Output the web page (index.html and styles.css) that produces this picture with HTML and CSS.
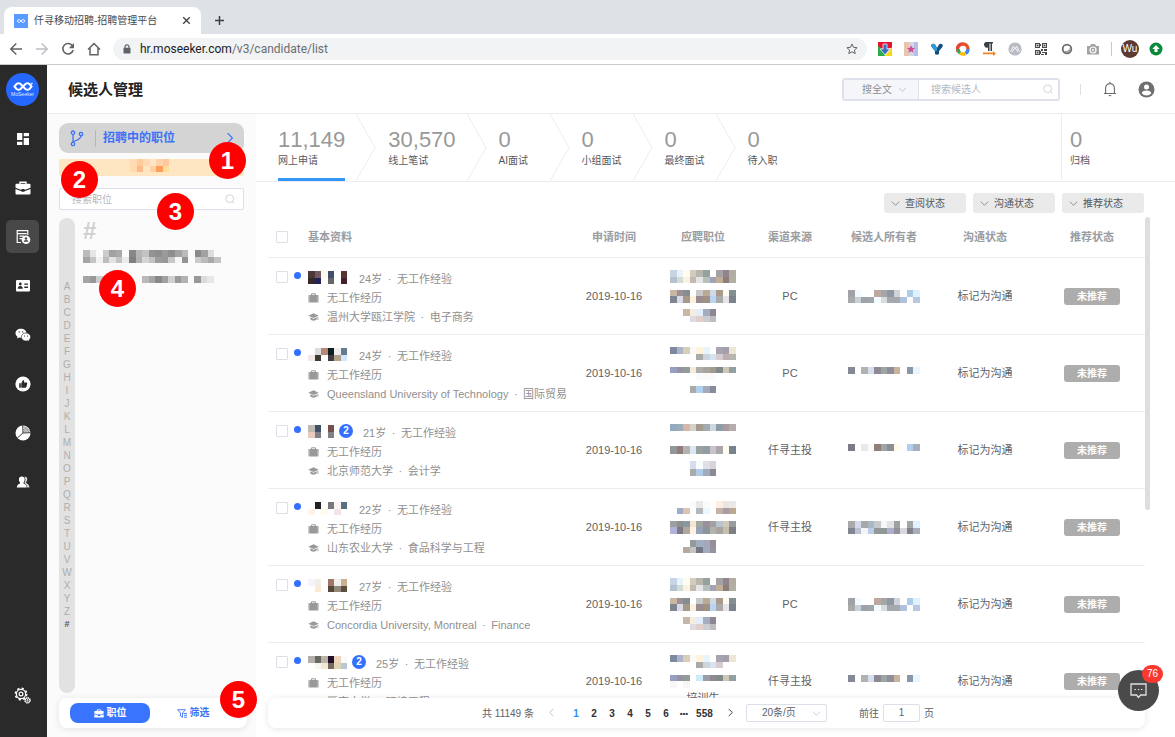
FILE: index.html
```html
<!DOCTYPE html>
<html lang="zh-CN">
<head>
<meta charset="utf-8">
<title>仟寻移动招聘-招聘管理平台</title>
<link rel="stylesheet" href="styles.css">
</head>
<body>
<svg class="defs" aria-hidden="true">
  <symbol id="chev-down" viewBox="0 0 10 10"><path d="M1 3l4 4 4-4" fill="none" stroke="currentColor"/></symbol>
  <symbol id="chev-right" viewBox="0 0 10 10"><path d="M3 1l4 4-4 4" fill="none" stroke="currentColor"/></symbol>
  <symbol id="chev-left" viewBox="0 0 10 10"><path d="M7 1L3 5l4 4" fill="none" stroke="currentColor"/></symbol>
  <symbol id="search" viewBox="0 0 10 10"><circle cx="4.7" cy="4.7" r="3.9" fill="none" stroke="currentColor" stroke-width=".8"/><path d="M7.5 7.5l1.9 1.9" stroke="currentColor" stroke-width=".8"/></symbol>
  <symbol id="bag" viewBox="0 0 10 10"><path d="M3 2.5V.8h4v1.700" fill="none" stroke="currentColor"/><rect x="0" y="2" width="1.300" height="7.500" rx=".5" fill="currentColor"/><rect x="1.500" y="2" width="7" height="7.500" fill="currentColor"/><rect x="8.700" y="2" width="1.300" height="7.500" rx=".5" fill="currentColor"/></symbol>
  <symbol id="cap" viewBox="0 0 12 10"><path d="M6 .8L.3 3.500 6 6.200l5.700-2.700z M2.500 5.300v2.200C4 9.600 8 9.600 9.500 7.500V5.300L6 7z M10.300 4.600h.9v3.600h-.9z" fill="currentColor"/></symbol>
  <symbol id="case" viewBox="0 0 16 14"><path d="M5 3V1.200h6V3" fill="none" stroke="currentColor" stroke-width="1.400"/><path d="M1.500 2.800h13q1 0 1 1v3L9.500 9V8h-3v1L.5 6.800v-3q0-1 1-1z M.5 8l6 2.200v.6h3v-.6l6-2.200v4.500q0 1-1 1h-13q-1 0-1-1z" fill="currentColor"/></symbol>
  <symbol id="stage-arrow" viewBox="0 0 20 67"><path d="M0 0l19 33.500L0 67" fill="none" stroke="#ecebf5"/></symbol>
  <symbol id="glasses" viewBox="0 0 24 10"><g fill="none" stroke="#fff" stroke-width="2.200"><path d="M12 5L9 2Q7 .6 5 2L2.500 5 5 8q2 1.400 4 0l3-3 3-3q2-1.400 4 0l2.500 3L19 8q-2 1.400-4 0z"/><path d="M21 2.500l1.500-1.300" stroke-width="1.400"/></g></symbol>
</svg>

<header class="browser">
  <div class="tabs">
    <div class="tab">
      <svg class="favicon" viewBox="0 0 14 14"><rect width="14" height="14" fill="#5b9bff"/><use href="#glasses" x="2" y="5" width="10" height="4"/></svg>
      <span>仟寻移动招聘-招聘管理平台</span>
      <button class="plain tab-close" aria-label="关闭"><svg width="9" height="9" viewBox="0 0 9 9"><path d="M1.200 1.200l6.600 6.600M7.800 1.200L1.200 7.800" stroke="#3c4043" stroke-width="1.300"/></svg></button>
    </div>
    <button class="plain tab-new" aria-label="新标签页"><svg width="11" height="11" viewBox="0 0 11 11"><path d="M5.500 1v9M1 5.500h9" stroke="#3c4043" stroke-width="1.500"/></svg></button>
  </div>
  <div class="toolbar">
    <nav class="history">
      <button class="plain" aria-label="后退"><svg width="14" height="14" viewBox="0 0 14 14"><path d="M13 7H2M7.300 1.500L1.800 7l5.500 5.500" fill="none" stroke="#5f6368" stroke-width="1.500"/></svg></button>
      <button class="plain" aria-label="前进"><svg width="14" height="14" viewBox="0 0 14 14"><path d="M1 7h11M6.700 1.500L12.200 7l-5.500 5.500" fill="none" stroke="#bcbfc3" stroke-width="1.500"/></svg></button>
      <button class="plain" aria-label="刷新"><svg width="14" height="14" viewBox="0 0 14 14"><path d="M11.600 4.200A5.200 5.200 0 1 0 12.100 8" fill="none" stroke="#5f6368" stroke-width="1.600"/><path d="M13 1v5.200H7.800z" fill="#5f6368"/></svg></button>
      <button class="plain" aria-label="主页"><svg width="14" height="14" viewBox="0 0 14 14"><path d="M1 7.500L7 1.500l6 6M3 6v6.700h2.500M8.500 12.700H11V6M3 12.700h8" fill="none" stroke="#5f6368" stroke-width="1.500"/></svg></button>
    </nav>
    <div class="address">
      <svg width="8" height="10" viewBox="0 0 8 10"><path d="M2 4V2.800a2 2 0 0 1 4 0V4" fill="none" stroke="#5f6368" stroke-width="1.200"/><rect x=".5" y="3.800" width="7" height="5.700" rx=".7" fill="#5f6368"/></svg>
      <span class="url"><b>hr.moseeker.com</b>/v3/candidate/list</span>
      <svg class="star" width="12" height="12" viewBox="0 0 12 12"><path d="M6 1l1.500 3.300 3.600.4-2.700 2.400.8 3.500L6 8.800l-3.200 1.800.8-3.500L.9 4.700l3.600-.4z" fill="none" stroke="#5f6368"/></svg>
    </div>
    <div class="extensions">
      <svg viewBox="0 0 14 14"><path d="M0 0h14v6L7 7 0 6z" fill="#e8112d"/><path d="M14 5L7 14h7z" fill="#f8d90f"/><path d="M0 4l6 4 1 6H0z" fill="#2aa84a"/><path d="M5 2h4v5h3l-5 6-5-6h3z" fill="#3b6fc4" stroke="#fff" stroke-width=".7"/></svg>
      <svg viewBox="0 0 14 14"><path fill="#e7c8ae" d="M0 0h5v14H0z"/><path fill="#d8d4e4" d="M5 0h5v14H5z"/><path fill="#b7bfe6" d="M10 0h4v14h-4z"/><path d="M7 3l1.100 2.800 3 .2-2.300 1.900.8 2.900L7 9.200l-2.600 1.600.8-2.900L2.900 6l3-.2z" fill="#d14b9b"/></svg>
      <svg viewBox="0 0 14 14"><path d="M1.500 2.500Q3 1 5 2.500L7 6l2-3.500q2-1.500 3.500 0 .8 1.500-.5 3L9 9v3q-2 1.500-4 0V9L2 5.500q-1.300-1.500-.5-3z" fill="#164b80"/><path d="M1.500 2.500Q3 1 5 2.500L7 6v3H5L2 5.500q-1.300-1.500-.5-3z" fill="#2c9ad6"/></svg>
      <svg viewBox="0 0 14 14"><g fill="none" stroke-width="3.400"><path d="M2.200 9.500A5 5 0 0 1 7 2" stroke="#ea4335"/><path d="M7 2a5 5 0 0 1 5 5" stroke="#e65320"/><path d="M12 7a5 5 0 0 1-2.500 4.400" stroke="#4285f4"/><path d="M9.500 11.400A5 5 0 0 1 4 11" stroke="#fbbc05"/><path d="M4 11A5 5 0 0 1 2 7" stroke="#34a853"/></g></svg>
      <svg viewBox="0 0 14 14"><path d="M4 0h7v1.500h-1V9H8.500V1.500h-1V9H6V5.500A2.750 2.750 0 0 1 4 0z" fill="#3a3f46"/><path d="M1 10.500h10V9l3 2.700-3 2.300v-1.800H1z" fill="#f5821f"/></svg>
      <svg viewBox="0 0 14 14"><circle cx="7" cy="7" r="6.600" fill="#b9bcc3"/><path d="M2.500 9.500l3-5L7 7l1.500-2.500 3 5M4 10l2-3M10 10L8 7" fill="none" stroke="#fff" stroke-width=".9"/></svg>
      <svg viewBox="0 0 14 14"><path fill="#4a4a4a" d="M1 1h5v5H1zM8 1h5v5H8zM1 8h5v5H1zM7 7h2v2H7zM10 7h3v2h-3zM8 10h3v1H8zM11 10h2v3h-2zM7 12h3v1H7zM6 2h1v2H6zM6 9h1v3H6z"/><path fill="#fff" d="M2 2h3v3H2zM9 2h3v3H9zM2 9h3v3H2z"/><path fill="#4a4a4a" d="M2.500 2.500h2v2h-2zM9.500 2.500h2v2h-2zM2.500 9.500h2v2h-2z"/></svg>
      <svg viewBox="0 0 14 14"><circle cx="7" cy="7" r="4.300" fill="#fff" stroke="#6a6a6a" stroke-width="1.800"/><path d="M4 8.500a3.400 3.400 0 0 0 6-3.300A4 4 0 0 1 4 8.500z" fill="#999"/></svg>
      <svg viewBox="0 0 14 14"><path d="M1 4h3l1-2h4l1 2h3v8.500H1z" fill="#a3a3a3"/><circle cx="7" cy="8" r="3" fill="none" stroke="#fff" stroke-width="1.200"/><circle cx="7" cy="8" r="1" fill="#fff"/></svg>
    </div>
    <div class="profile">
      <span class="wu">Wu</span>
      <svg width="14" height="14" viewBox="0 0 14 14"><circle cx="7" cy="7" r="6.500" fill="#0b8a3b"/><path d="M7 3l3.700 4H8.500v3h-3V7H3.300z" fill="#fff"/></svg>
    </div>
  </div>
</header>

<div class="app">
  <nav class="rail">
    <a class="logo" href="#" aria-label="MoSeeker"><svg width="22" height="9"><use href="#glasses" width="22" height="9"/></svg><span>MoSeeker</span></a>
    <a href="#" aria-label="概览"><svg width="14" height="14" viewBox="0 0 14 14"><path fill="#fff" d="M1 1h5.300v7H1zM1 9.700h5.300V13H1zM7.700 1H13v3.300H7.700zM7.700 6H13v7H7.700z"/></svg></a>
    <a href="#" aria-label="职位"><svg width="16" height="14"><use href="#case" width="16" height="14"/></svg></a>
    <a class="on" href="#" aria-label="候选人"><svg width="16" height="16" viewBox="0 0 16 16"><path d="M6 13.500H2.200V1.700h10.600V6M2.200 4.700h9.500M4.500 7.200h4.500M4.500 9.700h2.500" fill="none" stroke="#fff" stroke-width="1.200"/><circle cx="11" cy="10.800" r="4.300" fill="#fff"/><circle cx="11" cy="9.500" r="1.300" fill="#484848"/><path d="M8.600 12.700q0-1.800 2.400-1.800t2.400 1.800z" fill="#484848"/></svg></a>
    <a href="#" aria-label="名片"><svg width="14" height="12" viewBox="0 0 14 12"><rect width="14" height="11.500" rx="1" fill="#fff"/><circle cx="4.300" cy="4" r="1.400" fill="#2a2a2a"/><path d="M1.800 8.700q0-2.700 2.500-2.700t2.500 2.700zM8.300 3.400H12v1.300H8.300zM8.300 6.600H12v1.300H8.300z" fill="#2a2a2a"/></svg></a>
    <a href="#" aria-label="微信"><svg width="16" height="14" viewBox="0 0 16 14"><path d="M6 .8C2.800.8.5 2.800.5 5.300c0 1.500.8 2.700 2 3.500L2 10.500l2-1q1 .3 2 .3C9 9.800 11.500 7.800 11.500 5.300S9 .8 6 .8z" fill="#fff"/><path d="M11 5c-2.700 0-4.700 1.700-4.700 4s2 4 4.700 4l1.700-.3 1.600.9-.4-1.500c1-.8 1.700-1.900 1.700-3.100 0-2.300-2-4-4.600-4z" fill="#fff" stroke="#2a2a2a" stroke-width=".6"/><g fill="#2a2a2a"><circle cx="4.200" cy="3.900" r=".7"/><circle cx="7.700" cy="3.900" r=".7"/><circle cx="9.500" cy="8" r=".6"/><circle cx="12.500" cy="8" r=".6"/></g></svg></a>
    <a href="#" aria-label="推荐"><svg width="16" height="16" viewBox="0 0 16 16"><circle cx="8" cy="8" r="7.600" fill="#fff"/><path d="M4.200 7.200h1.600v4.500H4.200zM6.300 7.200L8 4q1.500 0 1.100 2.400h2.500q.8.200.6 1l-.8 3.500q-.2.800-1 .8H6.300z" fill="#2a2a2a"/></svg></a>
    <a href="#" aria-label="统计"><svg width="16" height="16" viewBox="0 0 16 16"><circle cx="8" cy="8" r="7.500" fill="#fff"/><path d="M8 8L7.700.3M8 8L2.300 13M8 8l7.600-.3" fill="none" stroke="#2a2a2a" stroke-width=".9"/><path d="M8.500 2l5.700 5.500M8.500 4l3.500 3.500M8.500 6l1.500 1.500M10 1.500l5 5" fill="none" stroke="#2a2a2a" stroke-width=".7"/></svg></a>
    <a href="#" aria-label="人员"><svg width="14" height="12" viewBox="0 0 14 12"><path d="M8.300.8Q11 .3 11.300 3q0 1.800-1.200 3v1q3 1 3.400 4.500h-2Q11 8.500 8.500 7q2-4 -.2-6.200z" fill="#ddd"/><path d="M5.800.6q2.900 0 2.900 3 0 1.800-1.200 3v.9q3 .8 3.300 4H.8q.3-3.200 3.300-4v-.9Q2.900 5.400 2.900 3.600q0-3 2.900-3z" fill="#fff"/></svg></a>
    <a class="settings" href="#" aria-label="设置"><svg width="18" height="18" viewBox="0 0 18 18"><g fill="none" stroke="#fff"><circle cx="7" cy="7" r="4.600" stroke-width="1.200"/><circle cx="7" cy="7" r="5.700" stroke-width="1.500" stroke-dasharray="2.200 2.270"/><circle cx="7" cy="7" r="1.900" stroke-width="1.200"/><circle cx="13.500" cy="13.300" r="2.300"/><circle cx="13.500" cy="13.300" r="3" stroke-dasharray="1.200 1.150"/><circle cx="13.500" cy="13.300" r=".7"/></g></svg></a>
  </nav>

  <div class="page">
    <header class="topbar">
      <h1>候选人管理</h1>
      <form class="finder">
        <select aria-label="搜索范围"><option>搜全文</option></select>
        <svg class="caret" width="9" height="9"><use href="#chev-down" width="9" height="9"/></svg>
        <input type="text" placeholder="搜索候选人" aria-label="搜索候选人">
        <svg class="lens" width="10" height="10"><use href="#search" width="10" height="10"/></svg>
      </form>
      <span class="rule"></span>
      <button class="plain" aria-label="通知"><svg width="14" height="16" viewBox="0 0 14 16"><path d="M1 12.500h12M2.600 12.500V7a4.400 4.400 0 0 1 8.800 0v5.500M7 2.500V.8" fill="none" stroke="#6a6a6a" stroke-width="1.100"/><path d="M5.300 14h3.400L7 15.500z" fill="#6a6a6a"/></svg></button>
      <button class="plain" aria-label="账户"><svg width="17" height="17" viewBox="0 0 17 17"><circle cx="8.500" cy="8.500" r="8" fill="#6f6f6f"/><circle cx="8.500" cy="6" r="2.500" fill="#fff"/><path d="M3.700 12.200q.5-2.700 4.800-2.700t4.800 2.700q-1.800 2.200-4.800 2.200t-4.800-2.200z" fill="#fff"/></svg></button>
    </header>

    <div class="work">
      <aside class="jobs">
        <button class="scope"><svg width="14" height="17" viewBox="0 0 14 17"><g fill="none" stroke="#3d72f6" stroke-width="1.300"><circle cx="3" cy="2.700" r="1.700"/><circle cx="3" cy="14" r="1.700"/><circle cx="11" cy="4" r="1.700"/><path d="M3 4.400v7.900M11 5.700Q11 9 3.500 11.500"/></g></svg><i></i><span>招聘中的职位</span><svg class="go" width="12" height="12"><use href="#chev-right" width="12" height="12"/></svg></button>
        <div class="notice"><svg class="mosaic" data-mosaic="notice" width="39" height="13"></svg></div>
        <label class="job-search"><input type="text" placeholder="搜索职位" aria-label="搜索职位"><svg width="10" height="10"><use href="#search" width="10" height="10"/></svg></label>
        <div class="directory">
          <ol class="letters"><li>A<li>B<li>C<li>D<li>E<li>F<li>G<li>H<li>I<li>J<li>K<li>L<li>M<li>N<li>O<li>P<li>Q<li>R<li>S<li>T<li>U<li>V<li>W<li>X<li>Y<li>Z<li class="now">#</ol>
          <div class="list"><h2>#</h2>
            <svg class="mosaic" data-mosaic="jobA" width="138" height="13"></svg>
            <svg class="mosaic" data-mosaic="jobB" width="131" height="7"></svg>
          </div>
        </div>
        <div class="switch">
          <button class="active"><svg width="10" height="9"><use href="#case" width="10" height="9"/></svg>职位</button>
          <button><svg width="10" height="9" viewBox="0 0 10 9"><path d="M.5.700h8L5.500 4v4.300L3.500 7V4zM6.500 4.500H10M7 6.300h3M7 8.200h3" fill="none" stroke="currentColor" stroke-width=".9"/></svg>筛选</button>
        </div>
      </aside>

      <main class="candidates">
        <nav class="stages">
          <a class="stage on" href="#"><strong>11,149</strong>网上申请</a><svg class="arrow"><use href="#stage-arrow"/></svg>
          <a class="stage" href="#"><strong>30,570</strong>线上笔试</a><svg class="arrow"><use href="#stage-arrow"/></svg>
          <a class="stage" href="#"><strong>0</strong>AI面试</a><svg class="arrow"><use href="#stage-arrow"/></svg>
          <a class="stage" href="#"><strong>0</strong>小组面试</a><svg class="arrow"><use href="#stage-arrow"/></svg>
          <a class="stage" href="#"><strong>0</strong>最终面试</a><svg class="arrow"><use href="#stage-arrow"/></svg>
          <a class="stage" href="#"><strong>0</strong>待入职</a>
          <a class="stage archive" href="#"><strong>0</strong>归档</a>
        </nav>
        <div class="filters">
          <button><svg width="9" height="9"><use href="#chev-down" width="9" height="9"/></svg>查阅状态</button>
          <button><svg width="9" height="9"><use href="#chev-down" width="9" height="9"/></svg>沟通状态</button>
          <button><svg width="9" height="9"><use href="#chev-down" width="9" height="9"/></svg>推荐状态</button>
        </div>
        <div class="scroller">
          <table>
            <colgroup><col class="c-pick"><col><col class="c-time"><col class="c-job"><col class="c-src"><col class="c-src"><col class="c-talk"><col class="c-rec"></colgroup>
            <thead><tr><th class="pick"><input type="checkbox" aria-label="全选"></th><th class="title">基本资料</th><th>申请时间</th><th>应聘职位</th><th>渠道来源</th><th>候选人所有者</th><th>沟通状态</th><th>推荐状态</th></tr></thead>
            <tbody>
              <tr><td class="pick"><input type="checkbox" aria-label="选择"><i class="dot"></i></td>
                <td class="info"><p class="who"><svg class="mosaic" data-mosaic="n1" width="39" height="13"></svg><span>24岁&ensp;·&ensp;无工作经验</span></p><p><svg class="ic"><use href="#bag"/></svg>无工作经历</p><p><svg class="ic"><use href="#cap"/></svg>温州大学瓯江学院&ensp;·&ensp;电子商务</p></td>
                <td>2019-10-16</td><td><svg class="mosaic" data-mosaic="p1" width="66" height="52"></svg></td><td>PC</td><td><svg class="mosaic" data-mosaic="o1" width="72" height="13"></svg></td><td>标记为沟通</td><td><span class="tag">未推荐</span></td></tr>
              <tr><td class="pick"><input type="checkbox" aria-label="选择"><i class="dot"></i></td>
                <td class="info"><p class="who"><svg class="mosaic" data-mosaic="n2" width="39" height="13"></svg><span>24岁&ensp;·&ensp;无工作经验</span></p><p><svg class="ic"><use href="#bag"/></svg>无工作经历</p><p><svg class="ic"><use href="#cap"/></svg>Queensland University of Technology&ensp;·&ensp;国际贸易</p></td>
                <td>2019-10-16</td><td><svg class="mosaic" data-mosaic="p2" width="66" height="52"></svg></td><td>PC</td><td><svg class="mosaic" data-mosaic="o2" width="72" height="13"></svg></td><td>标记为沟通</td><td><span class="tag">未推荐</span></td></tr>
              <tr><td class="pick"><input type="checkbox" aria-label="选择"><i class="dot"></i></td>
                <td class="info"><p class="who multi"><svg class="mosaic" data-mosaic="n3" width="26" height="13"></svg><b>2</b><span>21岁&ensp;·&ensp;无工作经验</span></p><p><svg class="ic"><use href="#bag"/></svg>无工作经历</p><p><svg class="ic"><use href="#cap"/></svg>北京师范大学&ensp;·&ensp;会计学</p></td>
                <td>2019-10-16</td><td><svg class="mosaic" data-mosaic="p3" width="66" height="52"></svg></td><td>仟寻主投</td><td><svg class="mosaic" data-mosaic="o3" width="72" height="13"></svg></td><td>标记为沟通</td><td><span class="tag">未推荐</span></td></tr>
              <tr><td class="pick"><input type="checkbox" aria-label="选择"><i class="dot"></i></td>
                <td class="info"><p class="who"><svg class="mosaic" data-mosaic="n4" width="39" height="13"></svg><span>22岁&ensp;·&ensp;无工作经验</span></p><p><svg class="ic"><use href="#bag"/></svg>无工作经历</p><p><svg class="ic"><use href="#cap"/></svg>山东农业大学&ensp;·&ensp;食品科学与工程</p></td>
                <td>2019-10-16</td><td><svg class="mosaic" data-mosaic="p4" width="66" height="52"></svg></td><td>仟寻主投</td><td><svg class="mosaic" data-mosaic="o4" width="72" height="13"></svg></td><td>标记为沟通</td><td><span class="tag">未推荐</span></td></tr>
              <tr><td class="pick"><input type="checkbox" aria-label="选择"><i class="dot"></i></td>
                <td class="info"><p class="who"><svg class="mosaic" data-mosaic="n5" width="39" height="13"></svg><span>27岁&ensp;·&ensp;无工作经验</span></p><p><svg class="ic"><use href="#bag"/></svg>无工作经历</p><p><svg class="ic"><use href="#cap"/></svg>Concordia University, Montreal&ensp;·&ensp;Finance</p></td>
                <td>2019-10-16</td><td><svg class="mosaic" data-mosaic="p1" width="66" height="52"></svg></td><td>PC</td><td><svg class="mosaic" data-mosaic="o1" width="72" height="13"></svg></td><td>标记为沟通</td><td><span class="tag">未推荐</span></td></tr>
              <tr><td class="pick"><input type="checkbox" aria-label="选择"><i class="dot"></i></td>
                <td class="info"><p class="who multi"><svg class="mosaic" data-mosaic="n6" width="39" height="13"></svg><b>2</b><span>25岁&ensp;·&ensp;无工作经验</span></p><p><svg class="ic"><use href="#bag"/></svg>无工作经历</p><p><svg class="ic"><use href="#cap"/></svg>暨南大学&ensp;·&ensp;环境工程</p></td>
                <td>2019-10-16</td><td class="job-text"><svg class="mosaic" data-mosaic="p6" width="66" height="33"></svg>培训生</td><td>仟寻主投</td><td><svg class="mosaic" data-mosaic="o2" width="72" height="13"></svg></td><td>标记为沟通</td><td><span class="tag">未推荐</span></td></tr>
            </tbody>
          </table>
          <span class="thumb"></span>
        </div>
        <footer class="pager">
          <span class="total">共 11149 条</span>
          <button class="off" aria-label="上一页"><svg width="9" height="9"><use href="#chev-left" width="9" height="9"/></svg></button>
          <button class="on">1</button><button>2</button><button>3</button><button>4</button><button>5</button><button>6</button><button class="more">•••</button><button class="wide">558</button>
          <button class="next" aria-label="下一页"><svg width="9" height="9"><use href="#chev-right" width="9" height="9"/></svg></button>
          <span class="size"><select aria-label="每页条数"><option>20条/页</option></select><svg width="9" height="9"><use href="#chev-down" width="9" height="9"/></svg></span>
          <label class="jump">前往<input type="text" value="1">页</label>
        </footer>
      </main>
    </div>
  </div>

  <span class="step s1">1</span><span class="step s2">2</span><span class="step s3">3</span><span class="step s4">4</span><span class="step s5">5</span>
  <button class="chat" aria-label="消息"><svg width="17" height="16" viewBox="0 0 17 16"><path d="M1 1h15v11h-5.500l-2 2.500-2-2.500H1z" fill="none" stroke="#e0e0e0" stroke-width="1.300"/><path d="M4.500 6.500H6M7.800 6.500h1.500M11 6.500h1.500" stroke="#e0e0e0" stroke-width="1.200"/></svg><span>76</span></button>
</div>
<script src="mosaic.js"></script>
</body>
</html>
```
FILE: styles.css
```css
* { box-sizing: border-box; }
body {
  margin: 0;
  height: 100vh;
  display: flex;
  flex-direction: column;
  overflow: hidden;
  background: #fff;
  color: #606266;
  font: 11px/19px "Liberation Sans", "Noto Sans CJK SC", sans-serif;
}
button, input, select { font: inherit; color: inherit; margin: 0; padding: 0; }
button { border: 0; background: none; }
a { color: inherit; text-decoration: none; }
p, h1, h2, ol { margin: 0; padding: 0; }
svg { flex: none; }
.defs { position: absolute; width: 0; height: 0; }
.plain { display: flex; align-items: center; justify-content: center; }
::placeholder { color: #b4b8c0; opacity: 1; }

/* browser frame */
.browser { flex: none; border-bottom: 1px solid #c9cbce; }
.tabs { height: 34px; padding: 7px 0 0 4px; display: flex; background: #dee1e6; }
.tab {
  width: 197px;
  padding: 0 10px;
  display: flex;
  align-items: center;
  gap: 6px;
  border-radius: 8px 8px 0 0;
  background: #fff;
  color: #45494d;
  font-size: 10px;
}
.favicon { width: 14px; height: 14px; }
.tab-close { margin-left: auto; }
.tab-new { width: 36px; }
.toolbar { height: 30px; display: flex; align-items: center; padding: 0 12px 0 9px; }
.history { display: flex; gap: 12px; width: 104px; }
.address {
  flex: 1;
  height: 22px;
  padding: 0 9px 0 10px;
  display: flex;
  align-items: center;
  gap: 9px;
  border-radius: 11px;
  background: #f1f3f4;
}
.url { color: #6a6e73; font: 12px/22px Roboto, sans-serif; }
.url b { color: #202124; font-weight: 400; }
.star { margin-left: auto; }
.extensions { display: flex; gap: 12px; padding: 0 11px; }
.extensions svg { width: 14px; height: 14px; }
.profile { display: flex; align-items: center; gap: 10px; padding-left: 9px; border-left: 1px solid #c6c8cb; height: 14px; }
.wu { width: 18px; border-radius: 9px; background: #5d3a30; color: #fff; font-size: 10px; line-height: 18px; text-align: center; }

/* application shell */
.app { flex: 1; min-height: 0; display: flex; position: relative; }
.rail {
  width: 47px;
  flex: none;
  padding: 8px 2px 25px 0;
  display: flex;
  flex-direction: column;
  align-items: center;
  gap: 16px;
  background: #2a2a2a;
}
.rail a { width: 33px; height: 33px; flex: none; display: flex; align-items: center; justify-content: center; border-radius: 5px; color: #fff; }
.rail .logo { flex-direction: column; border-radius: 50%; background: #2468ff; color: #dfe8ff; }
.logo span { font-size: 5px; line-height: 7px; }
.rail .on { background: #484848; }
.rail .settings { margin-top: auto; }
.page { flex: 1; min-width: 0; display: flex; flex-direction: column; }

.topbar { height: 49px; flex: none; padding: 0 20px 0 21px; display: flex; align-items: center; border-bottom: 1px solid #ebebef; }
.topbar h1 { margin-right: auto; color: #222; font-size: 15px; font-weight: 700; }
.finder { display: flex; align-items: center; width: 218px; height: 23px; position: relative; border: 2px solid #dfe2ec; border-radius: 3px; }
.finder select { appearance: none; width: 75px; height: 19px; padding-left: 18px; border: 0; border-right: 1px solid #dfe2ec; border-radius: 0; background: #f5f6fa; color: #8b8f96; font-size: 10px; }
.caret { position: absolute; left: 54px; color: #b9bdc6; }
.finder input { flex: 1; min-width: 0; height: 19px; padding-left: 12px; border: 0; font-size: 10px; }
.lens { margin-right: 5px; color: #c5c9d2; }
.rule { width: 1px; height: 11px; margin: 0 22px 0 20px; background: #dedfe4; }
.topbar .plain + .plain { margin-left: 21px; }

.work { flex: 1; min-height: 0; display: flex; }

/* job panel */
.jobs { width: 209px; flex: none; padding: 9px 12px; display: flex; flex-direction: column; background: #fbfbfb; }
.scope { height: 30px; flex: none; padding: 0 8px 0 11px; display: flex; align-items: center; border-radius: 9px; background: #d4d4d4; color: #3d72f6; font-size: 12px; font-weight: 700; }
.scope i { width: 1px; height: 17px; margin: 0 7px 0 11px; background: #b7b7b7; }
.go { margin-left: auto; }
.notice { height: 17px; margin: 6px 0 12px; padding-right: 5px; flex: none; display: flex; justify-content: center; border-radius: 2px; background: #ffe6c2; }
.job-search { height: 22px; flex: none; padding: 0 8px 0 12px; display: flex; align-items: center; border: 1px solid #dcdfe8; border-radius: 2px; background: #fff; color: #c5c9d2; }
.job-search input { flex: 1; min-width: 0; border: 0; font-size: 10px; }
.directory { flex: 1; min-height: 0; margin-top: 8px; display: flex; }
.letters { width: 16px; padding-top: 62px; border-radius: 8px; background: #e2e2e2; color: #aeaeae; font-size: 10px; line-height: 13px; text-align: center; list-style: none; }
.letters .now { color: #555; font-size: 9px; font-weight: 700; }
.list { padding-left: 8px; display: flex; flex-direction: column; }
.list h2 { margin-bottom: 7px; color: #d0d0d0; font-size: 24px; font-weight: 700; line-height: 25px; }
.list .mosaic + .mosaic { margin-top: 13px; }
.switch { height: 30px; flex: none; margin: 5px -3px 0 0; padding: 5px 11px; display: flex; border-radius: 8px; background: #fff; box-shadow: 0 1px 7px #0000001a; color: #3d72f6; font-size: 10px; font-weight: 700; }
.switch button { flex: 1; display: flex; align-items: center; justify-content: center; gap: 3px; border-radius: 8px; line-height: 20px; }
.switch .active { flex: none; width: 80px; background: #3874ff; color: #fff; }

/* stages */
.candidates { flex: 1; min-width: 0; display: flex; flex-direction: column; padding-bottom: 9px; }
.stages { height: 68px; flex: none; display: flex; padding-left: 22px; border-bottom: 1px solid #ececf1; }
.stage { min-width: 40px; padding-top: 15px; display: flex; flex-direction: column; border-bottom: 3px solid transparent; color: #55585e; font-size: 10px; line-height: 19px; }
.stage strong { color: #999; font-size: 22px; font-weight: 400; line-height: 22px; font-kerning: none; }
.stage.on { border-color: #3296fa; }
.arrow { width: 20px; height: 67px; margin: 0 12px 0 11px; }
.archive { width: 114px; margin-left: auto; padding-left: 8px; border-left: 1px solid #ececf1; }
.filters { display: flex; justify-content: flex-end; gap: 7px; margin: 11px 31px 4px 0; flex: none; }
.filters button { width: 82px; height: 20px; padding-left: 7px; display: flex; align-items: center; gap: 5px; border-radius: 3px; background: #eaeaea; color: #55585e; font-size: 10px; }
.filters svg { color: #888; }

/* table */
.scroller { flex: 1; min-height: 0; position: relative; overflow: hidden; margin: 0 25px 0 12px; }
table { width: calc(100% - 5px); table-layout: fixed; border-collapse: separate; border-spacing: 0; }
.c-pick { width: 40px; }
.c-time { width: 98px; }
.c-job { width: 80px; }
.c-src { width: 94px; }
.c-talk { width: 108px; }
.c-rec { width: 106px; }
th, td { padding: 0; border-bottom: 1px solid #ecedf2; text-align: center; white-space: nowrap; }
th { height: 41px; color: #999ca1; font-weight: 700; }
td { height: 77px; }
th.title, .info { text-align: left; }
.info { padding-top: 4px; color: #909090; }
.pick { text-align: left; vertical-align: top; }
td.pick { padding-top: 5px; }
th.pick { padding-top: 6px; }
input[type="checkbox"] { appearance: none; width: 12px; height: 12px; margin: 8px 0 0 8px; border: 1px solid #dcdfe8; border-radius: 1px; background: #fff; }
.dot { display: inline-block; width: 7px; height: 7px; margin: 0 0 4px 6px; border-radius: 50%; background: #3370ff; }
.info p { height: 19px; display: flex; align-items: center; gap: 8px; }
.info .who { gap: 12px; }
.who .mosaic, .who b { margin-bottom: 4px; }
.info .multi { gap: 5px; }
.multi b { width: 14px; height: 14px; border-radius: 50%; background: #3370ff; color: #fff; font-size: 10px; line-height: 14px; text-align: center; }
.multi span { margin-left: 5px; }
.ic { width: 11px; height: 10px; color: #999; }
td .mosaic { vertical-align: middle; }
.job-text { vertical-align: top; padding-top: 12px; line-height: 20px; }
.job-text .mosaic { display: block; margin: 0 auto; }
.tag { display: inline-block; width: 56px; border-radius: 3px; background: #adadad; color: #fff; font-size: 10px; font-weight: 700; line-height: 17px; }
.thumb { position: absolute; right: 0; top: 0; width: 5px; height: 61%; border-radius: 3px; background: #dddee0; }

/* pager */
.pager { height: 30px; flex: none; margin: 0 30px 0 12px; padding-left: 3px; display: flex; align-items: center; justify-content: center; border-radius: 8px; background: #fff; box-shadow: 0 1px 7px #0000001a; position: relative; font-size: 10px; }
.pager button { width: 18px; height: 20px; color: #303133; font-weight: 700; text-align: center; }
.pager .on { color: #2f8ff7; }
.pager .off { margin: 0 6px 0 9px; color: #b8bcc4; }
.pager .wide { width: 23px; }
.pager .next { margin-left: 6px; }
.pager .more { font-size: 8px; }
.size { position: relative; display: flex; align-items: center; margin: 0 32px 0 6px; }
.size select { appearance: none; width: 81px; height: 18px; padding-left: 15px; border: 1px solid #dcdfe8; border-radius: 2px; background: #fff; line-height: 16px; }
.size svg { position: absolute; right: 6px; color: #c5c9d2; }
.jump { display: flex; gap: 4px; }
.jump input { width: 37px; height: 18px; border: 1px solid #dcdfe8; border-radius: 2px; text-align: center; }

/* floating markers */
.step { position: absolute; width: 37px; height: 37px; border-radius: 50%; background: #f00; color: #fff; font-size: 24px; font-weight: 700; line-height: 37px; text-align: center; }
.s1 { left: 209px; top: 77px; }
.s2 { left: 61px; top: 96px; }
.s3 { left: 157px; top: 128px; }
.s4 { left: 99px; top: 205px; }
.s5 { left: 220px; bottom: 19px; }
.chat { position: absolute; right: 16px; bottom: 26px; width: 41px; height: 41px; display: flex; align-items: center; justify-content: center; border-radius: 50%; background: #4a4a4a; }
.chat span { position: absolute; right: -4px; top: -5px; width: 21px; border-radius: 9px; background: #f9392f; color: #fff; font-size: 10px; line-height: 18px; }
```
FILE: mosaic.js
```js
// Pixelated placeholders for private text: rows split by "/", "-" leaves a cell empty.
const mosaics = {
  notice: "ffdcb5 ffcc99 ffd9b0 - ffd2ac ffc9a0/ffdcaa ffb98e - ffcfa5 ff9e58 ffdd9c",
  jobA: "bbb e6e6e6 - ccc a2a2a2 aaa - 888 b5b5b5 c2c2c2 939393 8e8e8e 9a9a9a 8e8e8e a4a4a4 bbb - 8a8a8a a2a2a2 ddd -/a4a4a4 c5c5c5 f2f2f2 bdbdbd e2e2e2 c4c4c4 ececec 808080 b1b1b1 d5d5d5 c2c2c2 9c9c9c 989898 c8c8c8 f7f7f7 939393 - ccc bcbcbc a9a9a9 c4c4c4",
  jobB: "a5a5a5 989898 ccc eee - - - - - b9b9b9 a5a5a5 888 a0a0a0 d0d0d0 9b9b9b b2b2b2 - 989898 dbdbdb e7e7e7",
  n1: "4a3936 745b62 fcfbef 42506a - 5a3431/35292e 20245b - 666 - 45202e",
  n2: "- dddde1 b98676 0c211d efefef 647b91/f2e8e6 3d3b2e - 403a41 b2a18c cfe8ff",
  n3: "c1bab3 3e5065 - 764e4a/e9cabd 807f86 - 858085",
  n4: "- 222 - 7a777c fcf4f2 587083/fff4ea - fffcec - f0e6e8 -",
  n5: "f7f4f7 f1ede7 - a17469 efefeb c9b08e/- fbead3 - 574737 91897a 5b503f",
  n6: "b4afaa 686761 bbb3a4 230e2c eed6bc fafafa/- f9f6ed f3e8d6 756b5e e2d3b3 b9c6d3",
  p1: "c8d4e4 e8f4fc fffdf0 d4cbbb b6b8b0 94a19c fff a3a3a3 92838d b3aca0/b4c1ce d1dcd5 faf3e5 c7b8af e5e4e7 b7bfbd a1a3b6 c2ae98 8d7e7a b1afa2/-/c9b7a1 9b9097 858e8f - c9c9c9 b9aa98 cfdae8 a99b8c fdfcf1 858e90/7d858f dadbe8 a69888 fcf0df 998c90 a09182 bad4f5 aaa e7e5e9 7c838c/-/- - c6b8a7 f6eedc e2eefc a4adbd 8c8791/- - - dddce1 e0cfcb cacdd4 bdbdc0",
  p2: "7e899f abb4ca d8cfb5 fafafa fff3de e7f6fc - a8a4b0 a49fab ede6d7/- - - - aaa cfd4dc d5e4f3 d7cbd2 bdaeb2 b8b5af/-/979fc0 9792a3 919d9d f7ecdc adada9 a6a49d a09a8f 828989 d0c8b4 91a0a5/- - - - fafafa fafafa fafafa/-/- - - aaa afd0ee a2aabb 898b98/-",
  p3: "91abbd 9aaebb d7b5aa d6d2cb a39c8e a4abb0 ced8df 8c9ca8 ab9b9c b4adab/-/-/929798 927d7c b3b3b0 d9e8f3 98a29f 919ca5 c9c3ca aba8a9 fffdf0 798189/-/- - - d7dcef fafbff dfdfe8 d8d5da/- - - aaa aecce7 a2abbb 8c8796",
  p4: "- - - fafafa e8e8e8 fafafa - fceee0 e8e6e5 ece8e7/- a1abc7 dfc3b1 - b5b8bb eaf8ff - c4b1a9 a69da5 bba892/-/9d9ea0 8e8f90 8a98a4 f4e6d2 a5a7a3 999099 a3a1a3 b9c5cc d0c9bc 989c9d/b0b2d8 7d7989 b2a79e fff0df 98a2b7 8b949d b4b2ac a7a4a2 c9bea9 7d8186/-/- - - 969b9a 9faec3 a4a8ba 958e99/- - b5aaa0 c4c4c4 747884 a2abba 9692a1",
  p6: "7e899f abb4ca d8cfb5 fafafa fff3de e7f6fc - a8a4b0 a49fab ede6d7/- - - - aaa cfd4dc d5e4f3 d7cbd2 - -/-/979fc0 9792a3 919d9d - cfeaf9 979eaa 91898e 828989 d0c8b4 91a0a5/f7f7f7 - f7f7f7",
  o1: "a0a2a5 f1fbff - - bda8a2 a3a7a9 8e98a0 cfd2d9 - adcce7 dff1ff/aaa c8d1da 9da3a8 a1a6aa f3fcff d7dce0 a7a8ad a6a8b1 afc1dd fff bac7e2",
  o2: "858996 - b2b3b0 d6dfed 8e8a95 9ca6a5 8f8e9a c7b49a - 8a98aa e9f6fe/-",
  o3: "7b7a86 - e9e9e9 fafafa 927d7d 9ca6a5 8b8d99 fffae8 - afcfeb a7afbd/-",
  o4: "aaa d5d9ee a9a8a8 a8b8c8 c8c9cc f6f8f7 e0e4e4 9da2a3 - a3a6a6 dff2ff/80858f bcc4d1 f4f4f4 bacce8 939799 8e9895 aeadd1 949297 d9d8e1 808189 a7adb9"
};

const ns = "http://www.w3.org/2000/svg";
for (const svg of document.querySelectorAll("[data-mosaic]")) {
  const rows = mosaics[svg.dataset.mosaic].split("/").map(row => row.split(" "));
  const columns = Math.max(...rows.map(row => row.length));
  svg.setAttribute("viewBox", `0 0 ${columns} ${rows.length}`);
  svg.setAttribute("preserveAspectRatio", "none");
  svg.setAttribute("shape-rendering", "crispEdges");
  rows.forEach((row, y) => row.forEach((color, x) => {
    if (color === "-") return;
    const cell = document.createElementNS(ns, "rect");
    cell.setAttribute("x", x);
    cell.setAttribute("y", y);
    cell.setAttribute("width", 1);
    cell.setAttribute("height", 1);
    cell.setAttribute("fill", "#" + color);
    svg.append(cell);
  }));
}
```
